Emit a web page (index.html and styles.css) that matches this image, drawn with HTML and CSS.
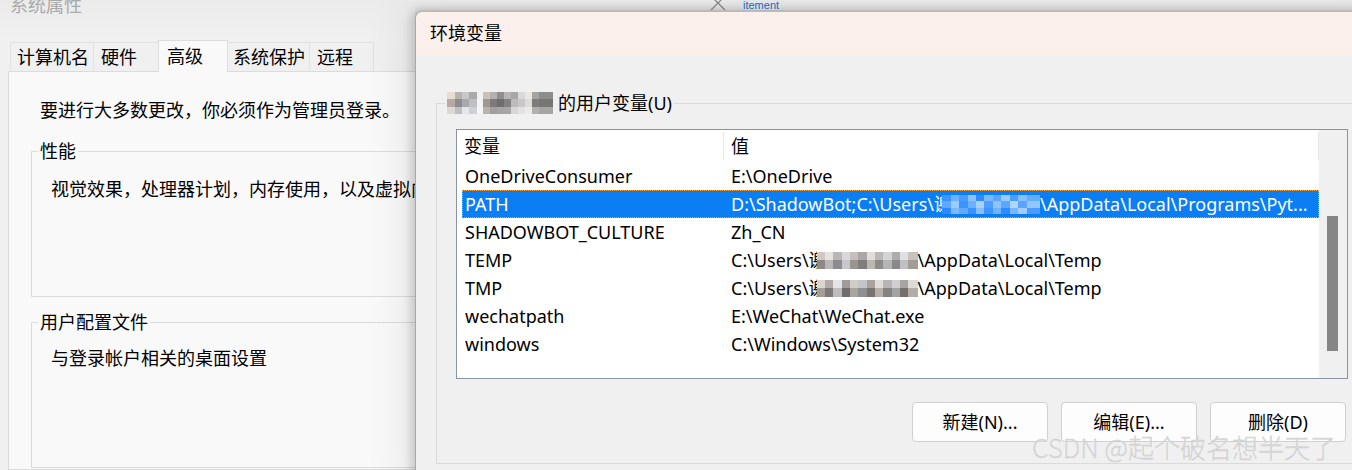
FILE: index.html
```html
<!DOCTYPE html>
<html lang="zh-CN">
<head>
<meta charset="utf-8">
<title>环境变量</title>
<link rel="stylesheet" href="styles.css">
</head>
<body>
<div class="screen">
  <section class="sysprops">
    <div class="sp-title">系统属性</div>
    <div class="tabs">
      <div class="tab t1">计算机名</div>
      <div class="tab t2">硬件</div>
      <div class="tab t3 active">高级</div>
      <div class="tab t4">系统保护</div>
      <div class="tab t5">远程</div>
    </div>
    <div class="sp-panel">
      <p class="notice">要进行大多数更改，你必须作为管理员登录。</p>
      <fieldset class="group g-perf">
        <legend>性能</legend>
        <div class="group-body">视觉效果，处理器计划，内存使用，以及虚拟内存</div>
      </fieldset>
      <fieldset class="group g-profile">
        <legend>用户配置文件</legend>
        <div class="group-body">与登录帐户相关的桌面设置</div>
      </fieldset>
    </div>
  </section>

  <div class="backwin">
    <svg class="close-x" width="16" height="16" viewBox="0 0 16 16"><path d="M1 1 L15 15 M15 1 L1 15" stroke="#8a8a8a" stroke-width="1.3" fill="none"/></svg>
    <span class="link">itement</span>
  </div>

  <section class="dialog">
    <div class="dlg-title">环境变量</div>
    <fieldset class="uservars">
      <legend><span class="mosaic mz-user"></span><span>的用户变量(U)</span></legend>
      <div class="listview">
        <div class="lv-main">
          <div class="lv-head">
            <div class="hcell">变量</div><span class="hsep"></span><div class="hcell">值</div><span class="hsep"></span>
          </div>
          <div class="lv-rows">
            <div class="lv-row"><div class="cell">OneDriveConsumer</div><div class="cell">E:\OneDrive</div></div>
            <div class="lv-row sel"><div class="cell">PATH</div><div class="cell">D:\ShadowBot;C:\Users\<span class="clip">谢</span><span class="mosaic mz-path"></span>\AppData\Local\Programs\Pyt...</div></div>
            <div class="lv-row"><div class="cell">SHADOWBOT_CULTURE</div><div class="cell">Zh_CN</div></div>
            <div class="lv-row"><div class="cell">TEMP</div><div class="cell">C:\Users\<span class="clip">谢</span><span class="mosaic mz-temp"></span>\AppData\Local\Temp</div></div>
            <div class="lv-row"><div class="cell">TMP</div><div class="cell">C:\Users\<span class="clip">谢</span><span class="mosaic mz-tmp"></span>\AppData\Local\Temp</div></div>
            <div class="lv-row"><div class="cell">wechatpath</div><div class="cell">E:\WeChat\WeChat.exe</div></div>
            <div class="lv-row"><div class="cell">windows</div><div class="cell">C:\Windows\System32</div></div>
          </div>
        </div>
        <div class="lv-scroll"><div class="thumb"></div></div>
      </div>
      <div class="buttons">
        <button class="btn">新建(N)...</button>
        <button class="btn">编辑(E)...</button>
        <button class="btn">删除(D)</button>
      </div>
    </fieldset>
  </section>

  <div class="watermark">CSDN @起个破名想半天了</div>
</div>
</body>
</html>
```
FILE: styles.css
```css
* { box-sizing: border-box; }
html, body { margin: 0; padding: 0; }
body { width: 1352px; height: 470px; overflow: hidden; background: #f0f0f0; }

.screen {
  position: relative;
  width: 1352px;
  height: 470px;
  overflow: hidden;
  background: #f0f0f0;
  font-family: "Noto Sans", "Noto Sans CJK SC", sans-serif;
  font-size: 18px;
  line-height: 24px;
  color: #000;
}

/* ---------- background window: 系统属性 ---------- */
.sysprops {
  width: 480px;
  height: 470px;
  display: flex;
  flex-direction: column;
  background: linear-gradient(#ebebeb, #f0f0f0 40px);
}
.sp-title {
  flex: none;
  height: 40px;
  padding-left: 10px;
  line-height: 10px;
  color: #a9a9a9;
}
.tabs {
  flex: none;
  display: flex;
  align-items: flex-end;
  height: 31px;
  padding-left: 10px;
}
.tab {
  height: 29px;
  border: 1px solid #e2e2e2;
  border-bottom: none;
  margin-right: -1px;
  background: #f0f0f0;
  line-height: 28px;
  white-space: nowrap;
}
.t1 { width: 84px; padding-left: 6px; }
.t2 { width: 66px; padding-left: 7px; }
.t3 { width: 70px; padding-left: 8px; }
.t4 { width: 83px; padding-left: 5px; }
.t5 { width: 65px; padding-left: 7px; }
.tab.active {
  height: 32px;
  margin-bottom: -1px;
  background: #f9f9f9;
  border-color: #dedede;
  line-height: 31px;
  position: relative;
  z-index: 1;
}
.sp-panel {
  flex: 1;
  margin-left: 8px;
  border: 1px solid #dcdcdc;
  background: #f9f9f9;
  padding: 26px 0 0 22px;
}
.notice { margin: 0 0 0 9px; white-space: nowrap; }
.group {
  margin: 17px 0 0 0;
  padding: 0;
  border: 1px solid #dcdcdc;
  min-width: 0;
}
.group legend { margin-left: 6px; padding: 0 2px; }
.group-body {
  height: 133px;
  padding: 14px 0 0 19px;
  white-space: nowrap;
  overflow: hidden;
}
.g-profile { margin-top: 13px; }
.g-profile .group-body { padding-top: 12px; }

/* ---------- strip of another window ---------- */
.backwin {
  position: absolute;
  left: 415px;
  top: 0;
  width: 937px;
  height: 14px;
  display: flex;
  align-items: flex-start;
  padding-left: 295px;
  background: linear-gradient(#eeeeee, #e2e2e2);
  overflow: hidden;
}
.close-x { flex: none; margin-top: -5px; }
.link {
  margin-left: 16px;
  font-family: "Liberation Sans", sans-serif;
  font-size: 11px;
  line-height: 11px;
  color: #2c6cb8;
  text-decoration: underline;
  background: #e6edf5;
  padding: 0 1px;
}

/* ---------- dialog: 环境变量 ---------- */
.dialog {
  position: absolute;
  left: 415px;
  top: 10px;
  width: 980px;
  height: 480px;
  background: #f0f0f0;
  border-top: 2px solid #bababa;
  border-left: 1px solid #a8a8a8;
  border-top-left-radius: 8px;
  box-shadow: -4px 0 10px rgba(0, 0, 0, 0.16), -12px 0 40px rgba(0, 0, 0, 0.08);
  overflow: hidden;
}
.dlg-title {
  height: 43px;
  background: #fbf0ec;
  padding-left: 14px;
  line-height: 43px;
}
.uservars {
  margin: 36px 0 0 20px;
  padding: 14px 0 21px 0;
  border: 1px solid #dadada;
  width: 932px;
  min-width: 0;
}
.uservars legend {
  margin-left: 8px;
  padding: 0 2px;
  display: flex;
  align-items: center;
  gap: 5px;
}

.listview {
  margin: 0 19px;
  height: 250px;
  border: 1px solid #8a93a3;
  background: #fff;
  display: flex;
}
.lv-main { width: 862px; flex: none; }
.lv-scroll {
  width: 28px;
  flex: none;
  background: #f0f0f0;
  padding: 86px 0 0 8px;
}
.thumb { width: 11px; height: 135px; background: #858585; }

.lv-head {
  display: grid;
  grid-template-columns: 266px 1px 594px 1px;
  align-items: center;
  height: 32px;
}
.hcell { padding-left: 7px; line-height: 32px; }
.hsep { height: 28px; background: #e5e5e5; }

.lv-rows { padding-left: 5px; }
.lv-row {
  display: grid;
  grid-template-columns: 266px 1fr;
  width: 857px;
  height: 28px;
  border: 1px solid transparent;
  line-height: 26px;
}
.cell {
  padding-left: 2px;
  white-space: nowrap;
  overflow: hidden;
  display: flex;
  align-items: center;
}
.lv-row.sel {
  background: #0b7ef4;
  border: 1px dotted #f3a13e;
  color: #fff;
}
.clip {
  display: inline-block;
  width: 8px;
  overflow: hidden;
  flex: none;
}

/* pixelated (blurred-out) name */
.mosaic { display: inline-block; flex: none; background-repeat: no-repeat; }
.mz-user {
  width: 106px;
  height: 22px;
  background-image:
    linear-gradient(90deg, #e4ddd4 0 8px, #b9b3ae 8px 15px, #c7c7c9 15px 22px, #a9a9ab 22px 30px, #f0f0f0 30px 36px, #c9c1bb 36px 43px, #b3b0ae 43px 50px, #8f8f92 50px 57px, #b7b4b3 57px 64px, #a8a6a7 64px 71px, #d9d9db 71px 78px, #ebe6df 78px 85px, #a3a3a3 85px 92px, #8d8d8d 92px 106px),
    linear-gradient(90deg, #b8aaa3 0 8px, #8d8c8f 8px 15px, #a7a9ad 15px 22px, #bdbfc4 22px 30px, #f3f3f3 30px 36px, #9e9893 36px 43px, #7d7a79 43px 50px, #6f6f70 50px 57px, #838283 57px 64px, #bcbcbd 64px 71px, #c8c8cb 71px 78px, #e0dcd6 78px 85px, #7d7d7d 85px 92px, #767676 92px 106px),
    linear-gradient(90deg, #dcd8d2 0 8px, #c1bec0 8px 15px, #e4e6ea 15px 22px, #cfd0d5 22px 30px, #f5f5f5 30px 36px, #b6b2ad 36px 43px, #a29f9d 43px 50px, #a6a4a4 50px 57px, #a8a6a7 57px 64px, #d6d6d8 64px 71px, #e2e2e4 71px 78px, #ede9e4 78px 85px, #b0b0b0 85px 92px, #a5a5a5 92px 106px);
  background-size: 100% 7px, 100% 8px, 100% 7px;
  background-position: 0 0, 0 7px, 0 15px;
}
.mz-path {
  width: 98px;
  height: 19px;
  background-image:
    linear-gradient(90deg, #3f95ff 0 9px, #6fb1ff 9px 17px, #4a9bff 17px 26px, #8cc2ff 26px 34px, #2f8cff 34px 42px, #7ab8ff 42px 51px, #5aa6ff 51px 59px, #9acbff 59px 68px, #4d9dff 68px 76px, #86bfff 76px 85px, #64acff 85px 98px),
    linear-gradient(90deg, #5ea8ff 0 9px, #9ccbff 9px 17px, #3a93ff 17px 26px, #6db0ff 26px 34px, #a8d1ff 34px 42px, #4e9eff 42px 51px, #8dc3ff 51px 59px, #5ba7ff 59px 68px, #b0d5ff 68px 76px, #5aa5ff 76px 85px, #93c6ff 85px 98px),
    linear-gradient(90deg, #2e8bff 0 9px, #7db9ff 9px 17px, #62aaff 17px 26px, #3a92ff 26px 34px, #86bfff 34px 42px, #3d95ff 42px 51px, #70b3ff 51px 59px, #2f8cff 59px 68px, #78b6ff 68px 76px, #a2ceff 76px 85px, #4a9bff 85px 98px);
  background-size: 100% 6px, 100% 7px, 100% 6px;
  background-position: 0 0, 0 6px, 0 13px;
}
.mz-temp, .mz-tmp { width: 101px; height: 17px; }
.mz-temp {
  background-image:
    linear-gradient(90deg, #cfc9c4 0 8px, #e6e3df 8px 16px, #b8b6b6 16px 25px, #d8d8da 25px 33px, #c5c0bb 33px 41px, #a9a7a7 41px 50px, #e1ddd8 50px 58px, #bbb8b7 58px 66px, #d4d4d6 66px 75px, #aeacab 75px 83px, #e0e0e2 83px 91px, #c6c2be 91px 101px),
    linear-gradient(90deg, #8f8985 0 8px, #b9b7b8 8px 16px, #8c8c8e 16px 25px, #c8c8cc 25px 33px, #9b948f 33px 41px, #7f7d7d 41px 50px, #bdb7b1 50px 58px, #8e8b8b 58px 66px, #b4b4b7 66px 75px, #8b8987 75px 83px, #c0c0c3 83px 91px, #a29c96 91px 101px);
  background-size: 100% 8px, 100% 9px;
  background-position: 0 0, 0 8px;
}
.mz-tmp {
  background-image:
    linear-gradient(90deg, #d9d5d0 0 8px, #b0aba7 8px 16px, #e4e4e6 16px 25px, #9f9c9b 25px 33px, #d0ccc7 33px 41px, #c4c4c6 41px 50px, #a8a39f 50px 58px, #e0ddd9 58px 66px, #b6b4b4 66px 75px, #cfcfd1 75px 83px, #a8a4a1 83px 91px, #dedad5 91px 101px),
    linear-gradient(90deg, #a49d98 0 8px, #7e7a78 8px 16px, #bdbdbf 16px 25px, #6f6c6b 25px 33px, #a9a39d 33px 41px, #8f8f92 41px 50px, #7a7470 50px 58px, #b6b0aa 58px 66px, #848282 66px 75px, #a3a3a6 75px 83px, #756f6b 83px 91px, #b3ada7 91px 101px);
  background-size: 100% 8px, 100% 9px;
  background-position: 0 0, 0 8px;
}

.buttons {
  display: flex;
  justify-content: flex-end;
  gap: 13px;
  margin: 23px 21px 0 0;
}
.btn {
  width: 136px;
  height: 40px;
  border: 1px solid #d0d0d0;
  border-radius: 4px;
  background: #fdfdfd;
  font: inherit;
  line-height: 38px;
  color: #000;
  padding: 0;
  text-align: center;
}

.watermark {
  position: absolute;
  left: 1032px;
  top: 431px;
  font-family: "Noto Sans CJK SC", sans-serif;
  font-size: 26px;
  font-weight: 300;
  line-height: 32px;
  white-space: nowrap;
  color: rgba(215, 215, 215, 0.85);
  -webkit-text-stroke: 0.4px rgba(150, 150, 150, 0.4);
  text-shadow: 0 0 1px rgba(255, 255, 255, 0.8);
}
```
